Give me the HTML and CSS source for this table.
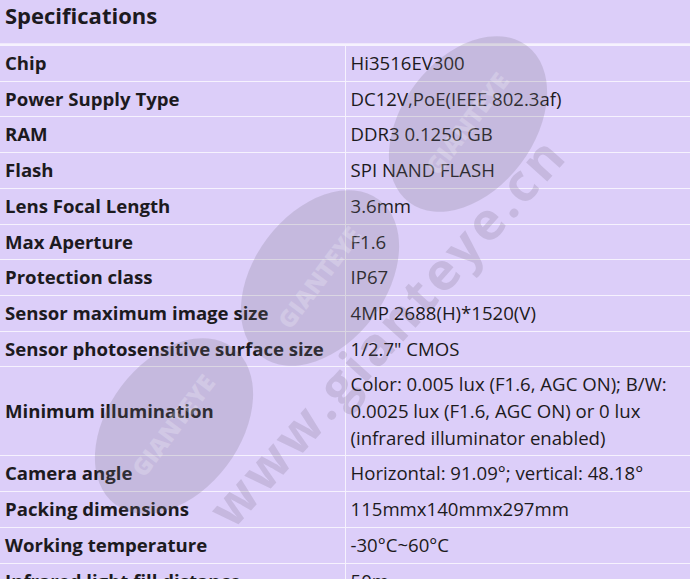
FILE: index.html
```html
<!DOCTYPE html>
<html lang="en">
<head>
  <meta charset="utf-8">
  <title>Specifications</title>
  <link rel="stylesheet" href="styles.css">
</head>
<body>
  <div class="spec">
    <h2 class="spec-title">Specifications</h2>
    <table class="spec-table">
      <tr><th>Chip</th><td>Hi3516EV300</td></tr>
      <tr><th>Power Supply Type</th><td>DC12V,PoE(IEEE 802.3af)</td></tr>
      <tr><th>RAM</th><td>DDR3 0.1250 GB</td></tr>
      <tr><th>Flash</th><td>SPI NAND FLASH</td></tr>
      <tr><th>Lens Focal Length</th><td>3.6mm</td></tr>
      <tr><th>Max Aperture</th><td>F1.6</td></tr>
      <tr><th>Protection class</th><td>IP67</td></tr>
      <tr><th>Sensor maximum image size</th><td>4MP 2688(H)*1520(V)</td></tr>
      <tr><th>Sensor photosensitive surface size</th><td>1/2.7" CMOS</td></tr>
      <tr><th>Minimum illumination</th><td>Color: 0.005 lux (F1.6, AGC ON); B/W: 0.0025 lux (F1.6, AGC ON) or 0 lux (infrared illuminator enabled)</td></tr>
      <tr><th>Camera angle</th><td>Horizontal: 91.09°; vertical: 48.18°</td></tr>
      <tr><th>Packing dimensions</th><td>115mmx140mmx297mm</td></tr>
      <tr><th>Working temperature</th><td>-30°C~60°C</td></tr>
      <tr><th>Infrared light fill distance</th><td>50m</td></tr>
      <tr><th>Video compression</th><td>H.265/H.264</td></tr>
    </table>

    <!-- site watermark, lies over the table -->
    <svg class="watermark" viewBox="0 0 690 600" width="690" height="600">
      <g class="wm-disc" transform="translate(468 124) rotate(-53)">
        <ellipse rx="98" ry="66"/>
        <text y="8">GIANTEYE</text>
      </g>
      <g class="wm-disc" transform="translate(320 278) rotate(-53)">
        <ellipse rx="98" ry="66"/>
        <text y="8">GIANTEYE</text>
      </g>
      <g class="wm-disc" transform="translate(174 426) rotate(-53)">
        <ellipse rx="98" ry="66"/>
        <text y="8">GIANTEYE</text>
      </g>
      <text class="wm-url" transform="translate(400 345) rotate(-48)" textLength="500" lengthAdjust="spacing">www.gianteye.cn</text>
    </svg>
  </div>
</body>
</html>
```

FILE: styles.css
```css
* {
  box-sizing: border-box;
}

body {
  margin: 0;
  background: #dccef9;
  color: #1c1a20;
  font-family: "Open Sans", "Noto Sans", sans-serif;
  overflow: hidden;
}

.spec {
  position: relative;
}

.spec-title {
  margin: 0;
  padding: 1px 5px 14px;
  font-size: 22px;
  line-height: 28px;
  font-weight: 700;
  border-bottom: 1px solid #efe8fc;
}

.spec-table {
  width: 100%;
  border-collapse: collapse;
  table-layout: fixed;
  border-top: 2px solid #f6f2fe;
}

.spec-table th,
.spec-table td {
  padding: 4px 6px 4px 5px;
  border-top: 1px solid #f6f2fe;
  border-bottom: 1px solid #f6f2fe;
  font-size: 18.6px;
  line-height: 26.7px;
  text-align: left;
  vertical-align: middle;
}

.spec-table th {
  width: 50%;
  font-weight: 700;
  border-right: 1px solid #f6f2fe;
}

.watermark {
  position: absolute;
  top: 0;
  left: 0;
  pointer-events: none;
}

.wm-disc ellipse {
  fill: rgba(120, 112, 128, 0.22);
}

.wm-disc text {
  fill: rgba(255, 255, 255, 0.22);
  font-family: "Open Sans", sans-serif;
  font-weight: 800;
  font-size: 24px;
  text-anchor: middle;
}

.wm-url {
  fill: rgba(110, 100, 120, 0.2);
  font-family: "Open Sans", sans-serif;
  font-weight: 700;
  font-size: 52px;
  text-anchor: middle;
}
```
